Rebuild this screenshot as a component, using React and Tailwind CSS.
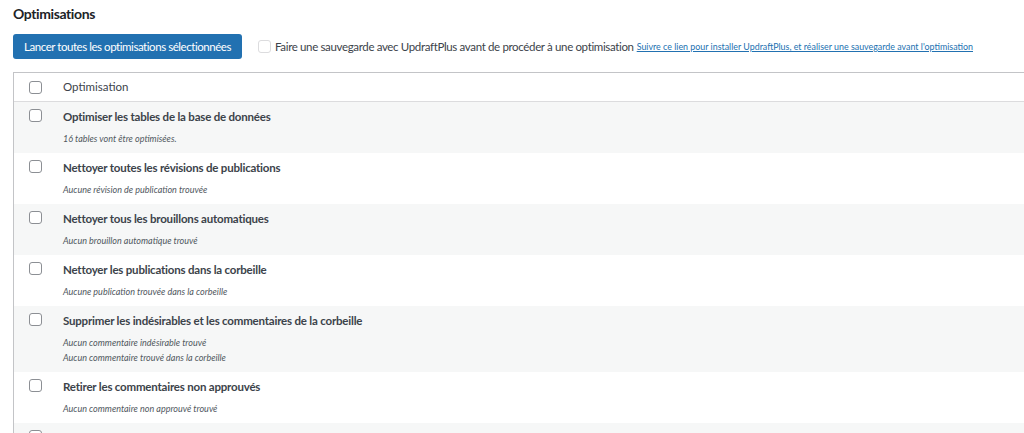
const FONT = { fontFamily: "Lato, 'Open Sans', sans-serif" };

const lignes = [
  { titre: 'Optimiser les tables de la base de données', notes: ['16 tables vont être optimisées.'] },
  { titre: 'Nettoyer toutes les révisions de publications', notes: ['Aucune révision de publication trouvée'] },
  { titre: 'Nettoyer tous les brouillons automatiques', notes: ['Aucun brouillon automatique trouvé'] },
  { titre: 'Nettoyer les publications dans la corbeille', notes: ['Aucune publication trouvée dans la corbeille'] },
  {
    titre: 'Supprimer les indésirables et les commentaires de la corbeille',
    notes: ['Aucun commentaire indésirable trouvé', 'Aucun commentaire trouvé dans la corbeille'],
  },
  { titre: 'Retirer les commentaires non approuvés', notes: ['Aucun commentaire non approuvé trouvé'] },
  { titre: 'Optimiser les données transitoires expirées', notes: ['Aucune donnée trouvée'] },
];

function Case({ pale }) {
  return (
    <span
      className={`block h-[13px] w-[13px] shrink-0 rounded-[3px] border bg-white ${
        pale ? 'border-[#dcdcde]' : 'border-[#8c8f94]'
      }`}
    />
  );
}

function Ligne({ ligne, index }) {
  return (
    <div className={`flex ${index % 2 === 0 ? 'bg-[#f6f7f7]' : 'bg-white'}`}>
      <div className="w-[49px] shrink-0 pl-[15px] pt-[7px]">
        <Case />
      </div>
      <div className="whitespace-nowrap pb-[7px] pt-[6px]">
        <div className="text-[11.5px] font-bold leading-[18px] tracking-[-0.2px] text-[#3c434a]">{ligne.titre}</div>
        <div className="mt-[5px]">
          {ligne.notes.map((n) => (
            <div key={n} className="text-[9px] italic leading-[15px] text-[#50575e]">
              {n}
            </div>
          ))}
        </div>
      </div>
    </div>
  );
}

export default function App() {
  return (
    <div className="h-[433px] overflow-hidden bg-white" style={FONT}>
      <h2 className="pl-[13px] pt-[4px] text-[14px] font-bold leading-[20px] tracking-[-0.4px] text-[#1d2327]">
        Optimisations
      </h2>

      <div className="mt-[10px] flex items-center whitespace-nowrap pl-[13px]">
        <button className="h-[25px] rounded-[3px] bg-[#2271b1] px-[11px] text-[11.5px] leading-[25px] tracking-[-0.45px] text-white">
          Lancer toutes les optimisations sélectionnées
        </button>
        <label className="ml-[16px] flex items-center gap-[4px]">
          <Case pale />
          <span className="text-[11.5px] tracking-[-0.35px] text-[#3c434a]">
            Faire une sauvegarde avec UpdraftPlus avant de procéder à une optimisation
          </span>
        </label>
        <a href="#" className="ml-[3px] text-[8.9px] text-[#2271b1] underline">
          Suivre ce lien pour installer UpdraftPlus, et réaliser une sauvegarde avant l'optimisation
        </a>
      </div>

      <div className="ml-[13px] mt-[13px] border-l border-t border-[#c3c4c7]">
        <div className="flex h-[29px] items-center border-b border-[#dcdcde]">
          <div className="w-[49px] shrink-0 pl-[15px]">
            <Case />
          </div>
          <span className="text-[11.5px] text-[#3c434a]">Optimisation</span>
        </div>
        {lignes.map((l, i) => (
          <Ligne key={l.titre} ligne={l} index={i} />
        ))}
      </div>
    </div>
  );
}
